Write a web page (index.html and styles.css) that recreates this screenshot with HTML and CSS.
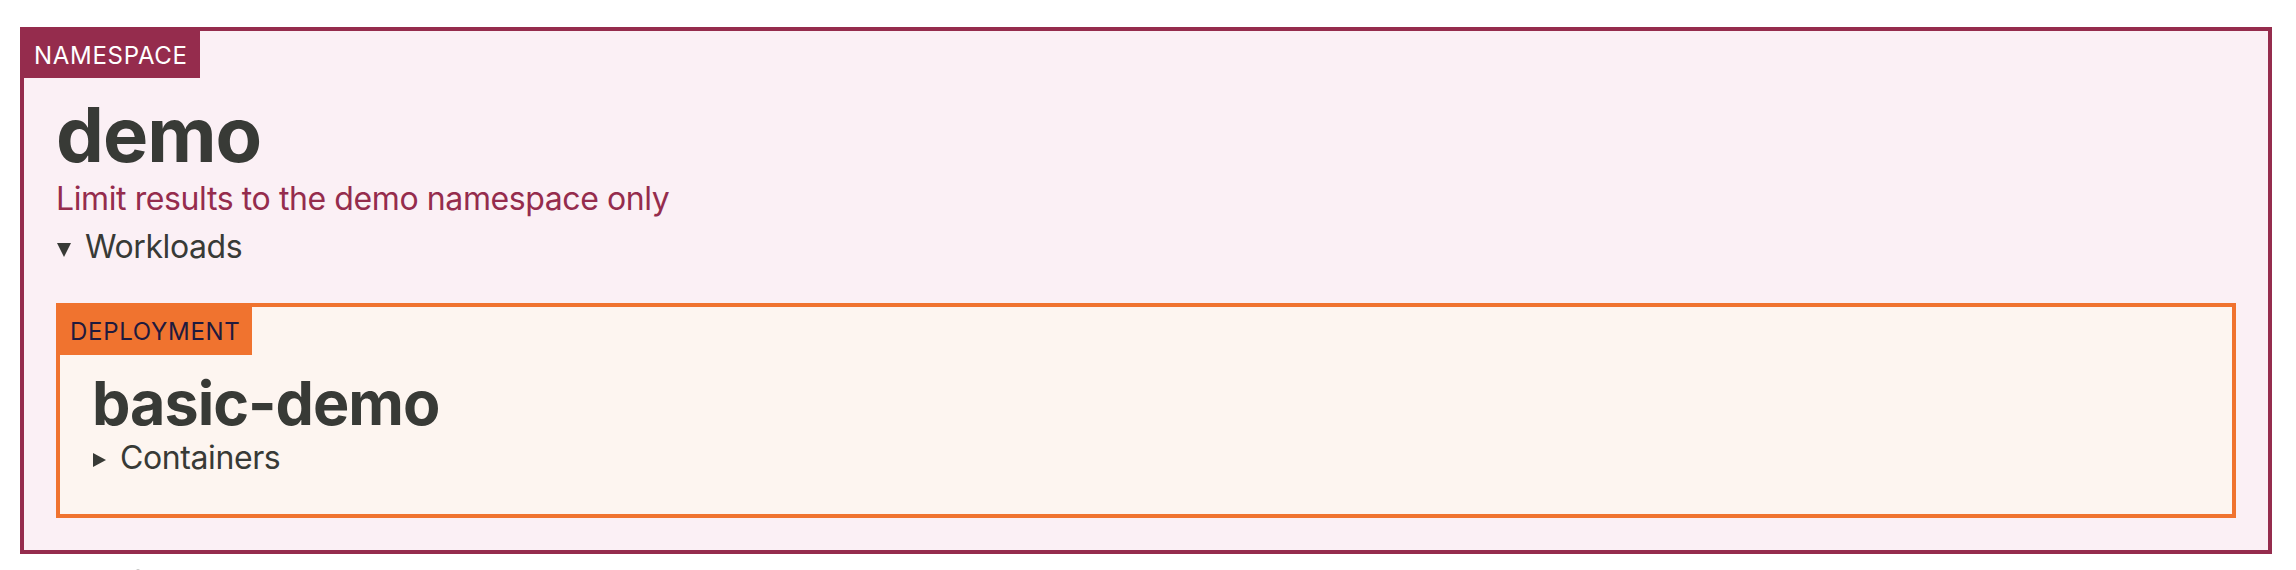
FILE: index.html
```html
<!DOCTYPE html>
<html>

<head>
    <meta charset="UTF-8" />
    <title>demo namespace</title>
    <link rel="stylesheet" href="styles.css">
</head>

<body>
    <div class="box namespace">
        <div class="kind">NAMESPACE</div>
        <h1 class="name">demo</h1>
        <p class="note">Limit results to the demo namespace only</p>
        <details open>
            <summary>Workloads</summary>
            <div class="box deployment">
                <div class="kind">DEPLOYMENT</div>
                <h2 class="name">basic-demo</h2>
                <details>
                    <summary>Containers</summary>
                    <p>basic-demo</p>
                </details>
            </div>
        </details>
    </div>
    <h2 class="next">Objects</h2>
</body>

</html>
```

FILE: styles.css
```css
body {
    margin: 27px 24px 0 20px;
    font-family: Inter, "Noto Sans", sans-serif;
    font-size: 32px;
    line-height: 48px;
    letter-spacing: -0.4px;
    color: #383a36;
    background: #fff;
}

* {
    margin: 0;
    padding: 0;
}

.box {
    border: 4px solid;
    padding: 0 32px 32px 32px;
}

.kind {
    width: fit-content;
    margin: -4px 0 0 -36px;
    height: 52px;
    box-sizing: border-box;
    padding: 6px 12px 0 14px;
    line-height: 46px;
    font-size: 24px;
    letter-spacing: 0.7px;
}

.namespace {
    border-color: #952c4d;
    background: #fbf0f5;
}

.namespace > .kind {
    height: 51px;
    background: #952c4d;
    color: #fff;
}

.deployment {
    margin-top: 32px;
    border-color: #f0732f;
    background: #fdf5f0;
}

.deployment > .kind {
    background: #f0732f;
    color: #1f1a3e;
}

.name {
    font-weight: bold;
    letter-spacing: -1px;
}

h1.name {
    margin-top: 15px;
    font-size: 76px;
    line-height: 82px;
}

h2.name {
    margin-top: 17px;
    font-size: 61px;
    line-height: 62px;
}

.note {
    color: #952c4d;
}

summary {
    list-style: none;
    cursor: pointer;
}

summary::-webkit-details-marker {
    display: none;
}

summary::before {
    content: "";
    display: inline-block;
    margin: 0 14px 2px 1px;
    border-top: 7.5px solid transparent;
    border-bottom: 7.5px solid transparent;
    border-left: 13px solid currentColor;
}

details[open] > summary::before {
    margin: 0 14px 1px 1px;
    border-top: 14px solid currentColor;
    border-left: 7.5px solid transparent;
    border-right: 7.5px solid transparent;
    border-bottom: 0;
}

.next {
    margin: 9px 0 0 25px;
    font-size: 61px;
    line-height: 62px;
}
```
